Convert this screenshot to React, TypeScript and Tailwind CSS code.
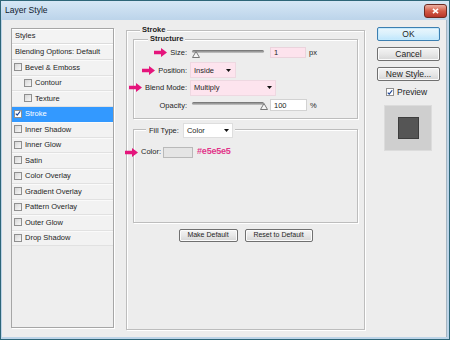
import React from 'react';

const styleItems = [
  { label: 'Bevel & Emboss' },
  { label: 'Contour', indent: true },
  { label: 'Texture', indent: true },
  { label: 'Stroke', checked: true, selected: true },
  { label: 'Inner Shadow' },
  { label: 'Inner Glow' },
  { label: 'Satin' },
  { label: 'Color Overlay' },
  { label: 'Gradient Overlay' },
  { label: 'Pattern Overlay' },
  { label: 'Outer Glow' },
  { label: 'Drop Shadow' },
];

function Arrow({ className = '' }: { className?: string }) {
  return (
    <svg viewBox="0 0 13 9" className={`h-[9px] w-[13px] shrink-0 ${className}`}>
      <path d="M0 2.8h7V0l6 4.5L7 9V6.2H0z" fill="#e5157c" />
    </svg>
  );
}

function CheckBox({ checked }: { checked?: boolean }) {
  return (
    <span
      className={`flex h-[8px] w-[8px] shrink-0 items-center justify-center border border-[#8f8f8f] ${
        checked ? 'bg-white' : 'bg-gradient-to-br from-[#d6d6d6] to-[#f8f8f8]'
      }`}
    >
      {checked && (
        <svg viewBox="0 0 8 8" className="h-[7px] w-[7px]">
          <path d="M1 4.2l2 2L7 1" fill="none" stroke="#1f4694" strokeWidth="1.6" />
        </svg>
      )}
    </span>
  );
}

function Caret() {
  return (
    <svg viewBox="0 0 5 3" className="h-[3px] w-[5px] shrink-0">
      <path d="M0 0h5L2.5 3z" fill="#111" />
    </svg>
  );
}

function Slider({ thumb }: { thumb: string }) {
  return (
    <div className="relative ml-[3px] h-[10px] w-[76px] shrink-0">
      <div className="absolute left-[2px] top-[2px] h-[3px] w-[72px] rounded-full bg-gradient-to-b from-[#6c6c6c] to-[#cacaca]" />
      <svg viewBox="0 0 8 7" className={`absolute top-[3px] h-[7px] w-[8px] ${thumb}`}>
        <path d="M4 0.5L7.5 6.5H0.5z" fill="#f6f6f6" stroke="#787878" />
      </svg>
    </div>
  );
}

function Label({ text, arrow }: { text: string; arrow?: boolean }) {
  return (
    <div className="flex w-[53px] shrink-0 items-center justify-end gap-[3px] whitespace-nowrap">
      {arrow && <Arrow />}
      <span>{text}</span>
    </div>
  );
}

function WinButton({ children, className = '' }: { children: React.ReactNode; className?: string }) {
  return (
    <div
      className={`flex items-center justify-center rounded-[2px] border border-[#707070] bg-gradient-to-b from-[#f4f4f4] via-[#e8e8e8] to-[#d6d6d6] shadow-[inset_0_0_0_1px_#fbfbfb] ${className}`}
    >
      {children}
    </div>
  );
}

export default function App() {
  return (
    <div className="flex h-[340px] w-[450px] flex-col border border-[#2e6678] bg-[#bdd4e8] font-['Liberation_Sans',Arial,sans-serif] text-[7.5px] text-[#1e1e1e]">
      {/* title bar */}
      <div className="flex h-[19px] shrink-0 items-center justify-between bg-gradient-to-b from-[#d6e7f5] to-[#bcd4ea] pl-[4px] pr-[2px]">
        <span className="text-[8.5px] text-[#10202e]">Layer Style</span>
        <div className="mt-[1px] flex h-[14px] w-[23px] items-center justify-center rounded-[3px] border border-[#6e2b22] bg-gradient-to-b from-[#eab0a4] via-[#d35a46] to-[#b8352a]">
          <svg viewBox="0 0 8 7" className="h-[6px] w-[7px]">
            <path d="M1 1l6 5M7 1L1 6" stroke="#fff" strokeWidth="1.8" />
          </svg>
        </div>
      </div>

      {/* body */}
      <div className="mb-[2px] ml-[1px] mr-[2px] flex flex-1 border-r border-[#a7b6c2] bg-[#ededed] pl-[9px] pt-[8px]">
        {/* styles list */}
        <div className="flex h-[300px] w-[103px] shrink-0 flex-col border border-[#a6a6a6] bg-[#eeeeee] shadow-[1px_1px_0_#fff]">
          <div className="flex h-[15px] shrink-0 items-center border-b border-[#dcdcdc] bg-[#f3f3f3] pl-[3px] shadow-[inset_0_1px_0_#fff]">
            Styles
          </div>
          <div className="flex h-[16px] shrink-0 items-center border-b border-[#dcdcdc] bg-[#f3f3f3] pl-[3px] shadow-[inset_0_1px_0_#fff]">
            Blending Options: Default
          </div>
          {styleItems.map((item) => (
            <div
              key={item.label}
              className={`flex h-[15.5px] shrink-0 items-center gap-[3px] border-b ${
                item.selected
                  ? 'border-[#3399ff] bg-[#3399ff] text-white'
                  : 'border-[#e1e1e1] bg-[#f2f2f2] shadow-[inset_0_1px_0_#fafafa]'
              } ${item.indent ? 'pl-[12px]' : 'pl-[2px]'}`}
            >
              <CheckBox checked={item.checked} />
              <span>{item.label}</span>
            </div>
          ))}
        </div>

        {/* stroke group */}
        <div className="relative ml-[12px] mt-[2px] flex h-[300px] w-[239px] shrink-0 flex-col border border-[#bdbdbd] shadow-[inset_1px_1px_0_#fff,1px_1px_0_#fff]">
          <div className="absolute left-[13px] top-[-6px] bg-[#ededed] px-[2px] text-[7.5px] font-bold leading-[10px]">
            Stroke
          </div>

          {/* structure */}
          <div className="relative ml-[6px] mt-[8px] flex h-[80px] w-[225px] flex-col border border-[#bdbdbd] pt-[4px] shadow-[inset_1px_1px_0_#fff,1px_1px_0_#fff]">
            <div className="absolute left-[14px] top-[-6px] bg-[#ededed] px-[2px] font-bold leading-[10px]">
              Structure
            </div>

            <div className="flex h-[17.5px] items-center">
              <Label text="Size:" arrow />
              <Slider thumb="left-[2px]" />
              <div className="ml-[4px] flex h-[11px] w-[36px] items-center border border-[#ead3dc] bg-[#fde3ed] pl-[3px]">
                1
              </div>
              <span className="ml-[3px]">px</span>
            </div>

            <div className="flex h-[17.5px] items-center">
              <Label text="Position:" arrow />
              <div className="ml-[3px] flex h-[16px] w-[46px] items-center justify-between border border-[#eed8e1] bg-[#fde4ee] pl-[3px] pr-[4px]">
                <span>Inside</span>
                <Caret />
              </div>
            </div>

            <div className="flex h-[17.5px] items-center">
              <Label text="Blend Mode:" arrow />
              <div className="ml-[3px] flex h-[16px] w-[86px] items-center justify-between border border-[#eed8e1] bg-[#fde4ee] pl-[3px] pr-[3px]">
                <span>Multiply</span>
                <Caret />
              </div>
            </div>

            <div className="flex h-[17.5px] items-center">
              <Label text="Opacity:" />
              <Slider thumb="left-[70px]" />
              <div className="ml-[4px] flex h-[12px] w-[37px] items-center border border-[#d2d2d2] bg-white pl-[3px]">
                100
              </div>
              <span className="ml-[3px]">%</span>
            </div>
          </div>

          {/* fill type */}
          <div className="relative ml-[6px] mt-[10px] flex h-[94px] w-[225px] flex-col border border-[#bdbdbd] pt-[16px] shadow-[inset_1px_1px_0_#fff,1px_1px_0_#fff]">
            <div className="absolute left-[12px] top-[-7px] flex h-[15px] items-center bg-[#ededed] pl-[3px] pr-[2px]">
              <span>Fill Type:</span>
              <div className="ml-[4px] flex h-[15px] w-[50px] items-center justify-between border border-[#dedede] bg-white pl-[3px] pr-[3px]">
                <span>Color</span>
                <Caret />
              </div>
            </div>

            <div className="flex h-[12px] items-center">
              <Arrow className="ml-[-9px] w-[12px]" />
              <span className="ml-[3px]">Color:</span>
              <div className="ml-[2px] h-[11px] w-[30px] border border-[#b9b9b9] bg-[#e5e5e5]" />
              <span className="ml-[4px] text-[9px] font-bold tracking-[-0.2px] text-[#e2358a]">#e5e5e5</span>
            </div>
          </div>

          <div className="mt-[6px] flex justify-center gap-[7px] text-[7px]">
            <WinButton className="h-[13px] w-[59px]">Make Default</WinButton>
            <WinButton className="h-[13px] w-[68px]">Reset to Default</WinButton>
          </div>
        </div>

        {/* buttons column */}
        <div className="ml-[12px] mt-[-1px] flex w-[63px] shrink-0 flex-col text-[8.5px]">
          <div className="flex h-[14px] items-center justify-center rounded-[2px] border border-[#3c7fb1] bg-gradient-to-b from-[#eaf6fd] via-[#d9f0fc] to-[#bee6fd] shadow-[inset_0_0_0_1px_#c6eafd]">
            OK
          </div>
          <WinButton className="mt-[6px] h-[14px]">Cancel</WinButton>
          <WinButton className="mt-[6px] h-[14px]">New Style...</WinButton>
          <div className="mt-[5px] flex items-center gap-[3px] pl-[9px]">
            <CheckBox checked />
            <span>Preview</span>
          </div>
          <div className="ml-[7px] mt-[6px] flex h-[46px] w-[48px] items-center justify-center border border-[#dcdcdc] bg-[#cfcfcf]">
            <div className="h-[22px] w-[21px] border border-[#3d3d3d] bg-[#555555]" />
          </div>
        </div>
      </div>
    </div>
  );
}
